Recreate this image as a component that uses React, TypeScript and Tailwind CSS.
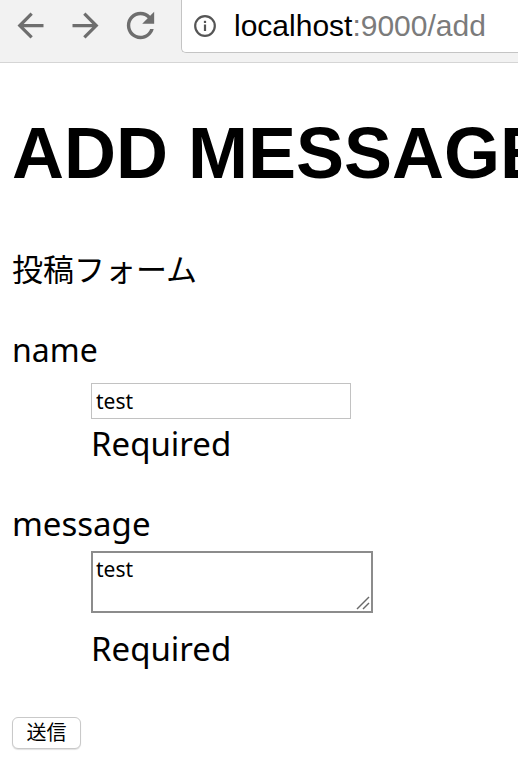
export default function App() {
  return (
    <div className="h-[772px] w-[518px] overflow-hidden bg-white text-black">
      {/* Browser toolbar */}
      <div className="flex h-[63px] items-start border-b border-[#d5d5d5] bg-[#f2f2f2]">
        <div className="flex h-[50px] items-center">
          <svg viewBox="0 0 24 24" className="ml-[11px] h-[39px] w-[39px] fill-[#6e6e6e]">
            <path d="M20 11H7.83l5.59-5.59L12 4l-8 8 8 8 1.41-1.41L7.83 13H20v-2z" />
          </svg>
          <svg viewBox="0 0 24 24" className="ml-[16px] h-[39px] w-[39px] fill-[#6e6e6e]">
            <path d="M12 4l-1.41 1.41L16.17 11H4v2h12.17l-5.58 5.59L12 20l8-8z" />
          </svg>
          <svg viewBox="0 0 24 24" className="ml-[15px] h-[41px] w-[41px] fill-[#6e6e6e]">
            <path d="M17.65 6.35C16.2 4.9 14.21 4 12 4c-4.42 0-7.99 3.58-7.99 8s3.57 8 7.99 8c3.73 0 6.84-2.55 7.73-6h-2.08c-.82 2.33-3.04 4-5.65 4-3.31 0-6-2.69-6-6s2.69-6 6-6c1.66 0 3.14.69 4.22 1.78L13 11h7V4l-2.35 2.35z" />
          </svg>
        </div>
        <div className="ml-[20px] flex h-[53px] flex-1 items-center rounded-bl-[5px] border border-t-0 border-r-0 border-[#c4c4c4] bg-white">
          <svg viewBox="0 0 24 24" className="ml-[11px] h-[24px] w-[24px]">
            <circle cx="12" cy="12" r="9.8" fill="none" stroke="#555555" strokeWidth="2.2" />
            <rect x="10.9" y="10.5" width="2.2" height="6.5" fill="#555555" />
            <rect x="10.9" y="6.8" width="2.2" height="2.2" fill="#555555" />
          </svg>
          <div className="ml-[17px] whitespace-nowrap font-['Liberation_Sans',Arial,sans-serif] text-[30px] leading-[30px]">
            <span className="text-black">localhost</span>
            <span className="text-[#7b7b7b]">:9000/add</span>
          </div>
        </div>
      </div>

      {/* Page */}
      <div className="flex flex-col items-start pl-[12px] font-['Noto_Sans','Noto_Sans_CJK_JP',sans-serif]">
        <h1 className="mt-[54px] whitespace-nowrap font-['Liberation_Sans',Arial,sans-serif] text-[72px] font-bold leading-[72px]">
          ADD MESSAGE
        </h1>
        <h2 className="mt-[60px] text-[31px] leading-[40px]">投稿フォーム</h2>

        <label className="mt-[41px] text-[32px] leading-[40px]">name</label>
        <input
          readOnly
          defaultValue="test"
          className="ml-[79px] mt-[13px] h-[36px] w-[260px] border border-[#c2c2c2] bg-white pl-[4px] text-[21px] outline-none"
        />
        <div className="ml-[79px] mt-[5px] text-[33px] leading-[40px]">Required</div>

        <label className="mt-[40px] text-[33px] leading-[40px]">message</label>
        <div className="relative ml-[79px] mt-[7px]">
          <textarea
            readOnly
            defaultValue="test"
            className="block h-[62px] w-[282px] resize-none border-2 border-[#8c8c8c] bg-white pl-[3px] pt-[2px] text-[21px] leading-[28px] outline-none"
          />
          {/* resize grip */}
          <svg viewBox="0 0 14 14" className="absolute bottom-[3px] right-[3px] h-[14px] w-[14px] stroke-[#6a6a6a]" strokeWidth="1.5">
            <line x1="1" y1="13" x2="13" y2="1" />
            <line x1="7" y1="13" x2="13" y2="7" />
          </svg>
        </div>
        <div className="ml-[79px] mt-[16px] text-[33px] leading-[40px]">Required</div>

        <button className="mt-[48px] flex h-[32px] w-[69px] items-center justify-center rounded-[6px] border border-[#c9c9c9] bg-white text-[20px] shadow-[0_1px_1px_rgba(0,0,0,0.12)]">
          送信
        </button>
      </div>
    </div>
  )
}
